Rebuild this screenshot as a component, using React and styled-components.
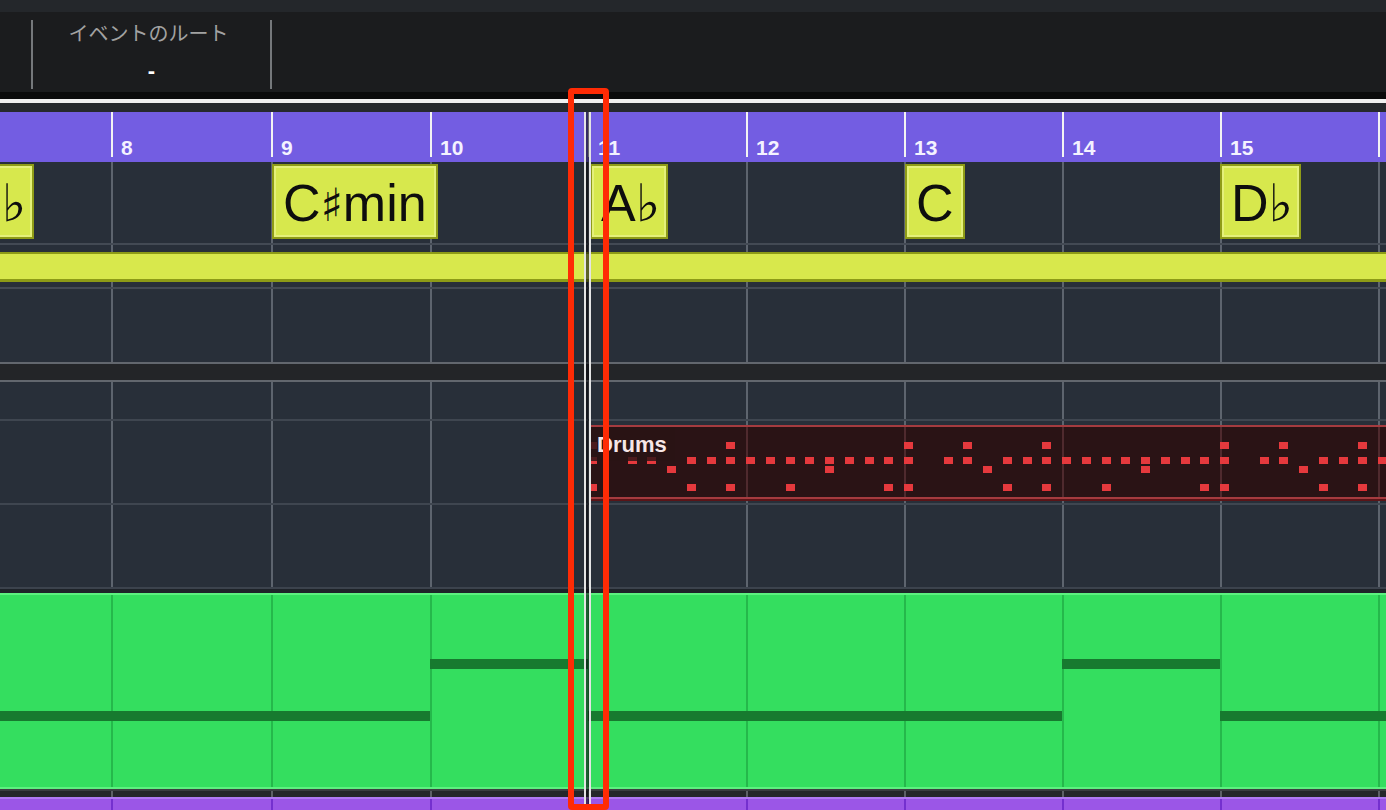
import React from 'react';
import styled, { createGlobalStyle } from 'styled-components';

const COLS = [158, 160, 159, 158, 158, 158, 158, 158, 158, 158];
const BARS = [7, 8, 9, 10, 11, 12, 13, 14, 15, 16];
const TEMPLATE = COLS.map((w) => `${w}px`).join(' ');
const SIXTEENTH = 9.875;

const GlobalStyle = createGlobalStyle`
  html, body {
    margin: 0;
    padding: 0;
    background: #282f39;
    overflow: hidden;
  }
  body {
    font-family: 'Liberation Sans', Arial, sans-serif;
  }
`;

const Screen = styled.div`
  position: relative;
  width: 1386px;
  height: 810px;
  overflow: hidden;
  background: #282f39;
`;

const Strip = styled.div`
  height: ${(p) => p.$h}px;
  background: ${(p) => p.$color};
`;

const InfoBar = styled.div`
  display: flex;
  height: 80px;
  box-sizing: border-box;
  padding: 8px 0 3px;
  background: #1b1c1e;
`;

const InfoSpacer = styled.div`
  width: 31px;
`;

const InfoDivider = styled.div`
  width: 2px;
  background: #75787b;
`;

const InfoField = styled.div`
  width: 237px;
  display: flex;
  flex-direction: column;
  align-items: center;
  padding-top: 3px;
`;

const InfoLabel = styled.div`
  font-family: 'Noto Sans CJK JP', sans-serif;
  font-size: 20px;
  line-height: 20px;
  color: #a2a2a2;
  padding-right: 6px;
`;

const InfoValue = styled.div`
  margin-top: 17px;
  font-size: 22px;
  line-height: 22px;
  font-weight: 700;
  color: #ffffff;
`;

const Arrange = styled.div`
  position: relative;
  overflow: hidden;
`;

const Lane = styled.div`
  display: grid;
  grid-template-columns: ${TEMPLATE};
  grid-template-rows: ${(p) => p.$h}px;
  margin-left: -47px;
  width: 1583px;
  background: ${(p) => p.$bg || '#282f39'};
  border-top: ${(p) => (p.$top ? `2px solid ${p.$top}` : 'none')};
  border-bottom: ${(p) => (p.$bottom ? `2px solid ${p.$bottom}` : 'none')};
`;

const BarCell = styled.div`
  grid-row: 1;
  grid-column: ${(p) => p.$col};
  min-width: 0;
  box-shadow: inset 2px 0 0 ${(p) => p.$line || '#5d646e'};
`;

const RulerCell = styled.div`
  grid-row: 1;
  grid-column: ${(p) => p.$col};
  background: linear-gradient(#f3f3f3, #f3f3f3) left top / 2px 45px no-repeat;
  padding: 25px 0 0 10px;
  font-size: 21px;
  line-height: 21px;
  font-weight: 700;
  color: #f4f2ff;
`;

const ChordBlock = styled.div`
  grid-row: 1;
  grid-column: ${(p) => p.$col};
  justify-self: start;
  align-self: start;
  z-index: 1;
  margin: 2px 0 0 ${(p) => p.$offset}px;
  height: 75px;
  box-sizing: border-box;
  padding: 0 9px;
  border: 2px solid #8f9c17;
  box-shadow: inset 0 0 0 2px #e4f07a;
  background: #d7e84d;
  font-size: 52px;
  line-height: 75px;
  color: #0e0e0e;
  white-space: nowrap;
`;

const Accidental = styled.span`
  font-family: 'DejaVu Sans', sans-serif;
  font-size: ${(p) => (p.$flat ? 52 : 46)}px;
  margin-right: ${(p) => (p.$flat ? -3.5 : 0)}px;
`;

const ChordTrackBar = styled.div`
  grid-row: 1;
  grid-column: 1 / -1;
  z-index: 1;
  align-self: start;
  margin-top: 7px;
  height: 30px;
  box-sizing: border-box;
  background: #d8e84c;
  border-top: 2px solid #8d9b16;
  border-bottom: 3px solid #8d9b16;
`;

const Divider = styled.div`
  height: 16px;
  background: #232528;
  border-top: 2px solid #62676e;
  border-bottom: 2px solid #62676e;
`;

const Region = styled.div`
  grid-row: 1;
  grid-column: 5 / -1;
  z-index: 1;
  align-self: start;
  position: relative;
  overflow: hidden;
  margin: 4px 0 0 1px;
  height: 74px;
  box-sizing: border-box;
  border-top: 2px solid #a53b3f;
  border-bottom: 2px solid #a53b3f;
  border-left: 2px solid #a53b3f;
  box-shadow: 0 2px 0 #5a1518;
  background-color: #2a1315;
  background-image: repeating-linear-gradient(
    90deg,
    transparent 0 155px,
    #4f2a2e 155px 157px,
    transparent 157px 158px
  );
`;

const RegionLabel = styled.div`
  position: relative;
  z-index: 1;
  display: inline-block;
  padding: 7px 8px 6px 6px;
  background: rgba(42, 19, 21, 0.82);
  font-size: 22px;
  line-height: 21px;
  font-weight: 700;
  color: #f6e6e6;
`;

const Note = styled.div`
  position: absolute;
  width: 9px;
  height: 7px;
  background: #e5393d;
`;

const Gap = styled.div`
  height: 4px;
  background: #1e2329;
`;

const LevelBar = styled.div`
  margin-top: ${(p) => (p.$high ? 64 : 116)}px;
  height: 10px;
  background: #177a2f;
`;

const Playhead = styled.div`
  position: absolute;
  left: 584px;
  top: 0;
  width: 7px;
  height: 693px;
  box-sizing: border-box;
  border-left: 2px solid #e4e4e4;
  border-right: 2px solid #e4e4e4;
  background: rgba(10, 10, 15, 0.6);
  z-index: 5;
`;

const Highlight = styled.div`
  position: absolute;
  left: 568px;
  top: 88px;
  width: 41px;
  height: 722px;
  box-sizing: border-box;
  border: 6px solid #ff2b05;
  border-radius: 4px;
  z-index: 10;
`;

const CHORDS = [
  { col: 1, offset: 3, root: 'E', acc: '♭', rest: '' },
  { col: 3, offset: 1, root: 'C', acc: '♯', rest: 'min' },
  { col: 5, offset: 2, root: 'A', acc: '♭', rest: '' },
  { col: 7, offset: 1, root: 'C', acc: '', rest: '' },
  { col: 9, offset: 0, root: 'D', acc: '♭', rest: '' },
];

const ROW_TOPS = { a: 15, b: 30, c: 39, d: 57 };
const PATTERN = {
  a: [0, 6, 14],
  b: [0, 4, 6, 10, 12, 14, 16, 18, 20, 22, 24, 26, 28, 30],
  c: [8, 24],
  d: [0, 10, 14, 20, 30],
};

const NOTES = [];
[0, 32, 64].forEach((start) => {
  Object.keys(PATTERN).forEach((row) => {
    PATTERN[row].forEach((step) => {
      if (row === 'a' && start === 0 && step === 6) return;
      NOTES.push({ row, pos: start + step });
    });
  });
});

const LEVELS = [false, false, false, true, false, false, false, true, false, false];

function GridCells({ line }) {
  return BARS.map((bar, i) => <BarCell key={bar} $col={i + 1} $line={line} />);
}

export default function App() {
  return (
    <Screen>
      <GlobalStyle />
      <Strip $h={12} $color="#24272b" />
      <InfoBar>
        <InfoSpacer />
        <InfoDivider />
        <InfoField>
          <InfoLabel>イベントのルート</InfoLabel>
          <InfoValue>-</InfoValue>
        </InfoField>
        <InfoDivider />
      </InfoBar>
      <Strip $h={7} $color="#0b0b0c" />
      <Strip $h={4} $color="#f0f0f0" />
      <Strip $h={9} $color="#26292d" />

      <Arrange>
        <Lane $h={50} $bg="#735de2">
          {BARS.map((bar, i) => (
            <RulerCell key={bar} $col={i + 1}>
              {i > 0 && bar < 16 ? bar : ''}
            </RulerCell>
          ))}
        </Lane>

        <Lane $h={81} $bottom="#434a54">
          <GridCells />
          {CHORDS.map((c) => (
            <ChordBlock key={c.col} $col={c.col} $offset={c.offset}>
              {c.root}
              {c.acc && <Accidental $flat={c.acc === '♭'}>{c.acc}</Accidental>}
              {c.rest}
            </ChordBlock>
          ))}
        </Lane>

        <Lane $h={42} $bottom="#434a54">
          <GridCells />
          <ChordTrackBar />
        </Lane>

        <Lane $h={73}>
          <GridCells />
        </Lane>

        <Divider />

        <Lane $h={37} $bottom="#3f4650">
          <GridCells />
        </Lane>

        <Lane $h={82} $bottom="#3f4650">
          <GridCells />
          <Region>
            <RegionLabel>Drums</RegionLabel>
            {NOTES.map((n, i) => (
              <Note
                key={i}
                style={{ left: n.pos * SIXTEENTH - 3, top: ROW_TOPS[n.row] }}
              />
            ))}
          </Region>
        </Lane>

        <Lane $h={82} $bottom="#3c434d">
          <GridCells />
        </Lane>

        <Gap />

        <Lane $h={192} $bg="#34de5f" $top="#5cf07f" $bottom="#5cf07f">
          {BARS.map((bar, i) => (
            <BarCell key={bar} $col={i + 1} $line="#25b84b">
              <LevelBar $high={LEVELS[i]} />
            </BarCell>
          ))}
        </Lane>

        <Lane $h={6} $bg="#25272a" $top="#3b3e41">
          <GridCells line="#5d6066" />
        </Lane>

        <Lane $h={11} $bg="#9b56e7" $top="#b07af3">
          <GridCells line="#7430cf" />
        </Lane>

        <Playhead />
      </Arrange>

      <Highlight />
    </Screen>
  );
}
